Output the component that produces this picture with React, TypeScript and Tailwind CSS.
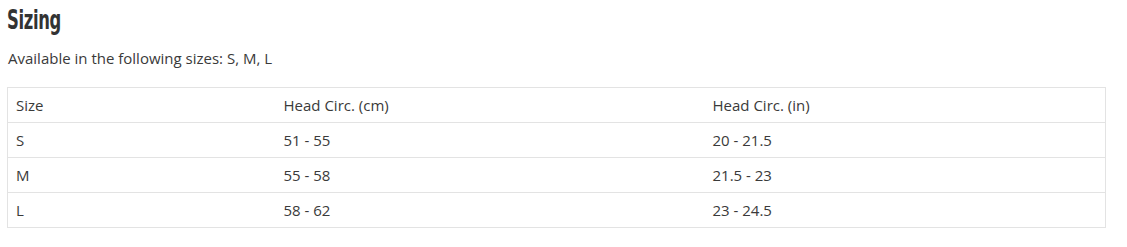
export default function App() {
  const rows = [
    ["S", "51 - 55", "20 - 21.5"],
    ["M", "55 - 58", "21.5 - 23"],
    ["L", "58 - 62", "23 - 24.5"],
  ];
  const font = { fontFamily: "'Open Sans', Lato, sans-serif" };
  return (
    <div className="w-[1127px] h-[247px] bg-white pl-[7px] pr-[21px] pt-[3px]" style={font}>
      <h2
        className="text-[26px] leading-[34px] font-bold text-[#333333] tracking-[-0.5px] scale-x-[0.7] origin-left"
        style={{ fontFamily: "'DejaVu Sans', sans-serif", fontStretch: "condensed" }}
      >
        Sizing
      </h2>
      <p className="mt-[11px] text-[15px] leading-[20px] text-[#3a3a3a] pl-[1px]">
        Available in the following sizes: S, M, L
      </p>
      <table className="mt-[19px] w-[1099px] border-collapse border border-[#e3e3e3] text-[15px] text-[#3a3a3a]">
        <tbody>
          <tr className="h-[35px]">
            <td className="w-[268px] px-[8px] border-b border-[#e3e3e3]">Size</td>
            <td className="w-[429px] px-[8px] border-b border-[#e3e3e3]">Head Circ. (cm)</td>
            <td className="px-[8px] border-b border-[#e3e3e3]">Head Circ. (in)</td>
          </tr>
          {rows.map((r) => (
            <tr key={r[0]} className="h-[35px]">
              {r.map((c, i) => (
                <td key={i} className="px-[8px] border-b border-[#e3e3e3]">
                  {c}
                </td>
              ))}
            </tr>
          ))}
        </tbody>
      </table>
    </div>
  );
}
